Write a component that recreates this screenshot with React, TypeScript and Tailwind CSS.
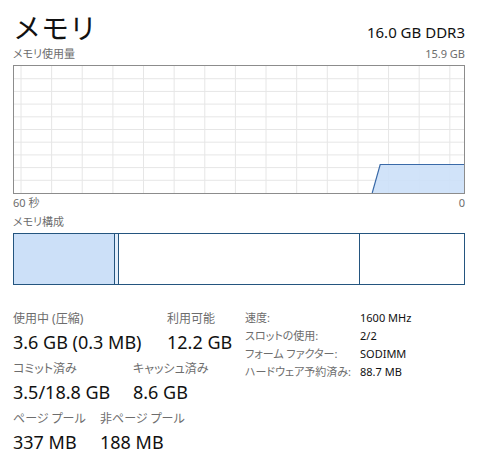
import React from 'react';

const usageFill = '#cce0f8';
const usageLine = '#3a6aa8';

const vLines = Array.from({ length: 15 }, (_, i) => 7 + i * 30.7);
const hLines = Array.from({ length: 9 }, (_, i) => 12.7 * (i + 1));

const UsageGraph: React.FC = () => (
  <div className="h-[129px] w-full border border-[#8c8c8c] bg-white">
    <svg width="100%" height="127" viewBox="0 0 451 127" preserveAspectRatio="none" className="block">
      {vLines.map(x => (
        <line key={`v${x}`} x1={x} y1={0} x2={x} y2={127} stroke="#e6e6e6" strokeWidth={1} />
      ))}
      {hLines.map(y => (
        <line key={`h${y}`} x1={0} y1={y} x2={451} y2={y} stroke="#e6e6e6" strokeWidth={1} />
      ))}
      <polygon points="359,127 367,98.5 451,98.5 451,127" fill={usageFill} fillOpacity={0.9} />
      <polyline points="359,127 367,98.5 451,98.5" fill="none" stroke={usageLine} strokeWidth={1.2} />
    </svg>
  </div>
);

const Stat: React.FC<{ label: string; value: string; width?: string }> = ({ label, value, width }) => (
  <div className={width}>
    <div className="text-[12px] leading-[16px] text-[#6d6d6d] [font-feature-settings:'palt']">{label}</div>
    <div className="mt-[2px] text-[18px] leading-[26px] text-[#111]">{value}</div>
  </div>
);

const details = [
  ['速度:', '1600 MHz'],
  ['スロットの使用:', '2/2'],
  ['フォーム ファクター:', 'SODIMM'],
  ['ハードウェア予約済み:', '88.7 MB'],
];

export default function App() {
  return (
    <div className="h-[469px] w-[488px] bg-white pl-[13px] pr-[23px] font-['Noto_Sans','Noto_Sans_CJK_JP',sans-serif]">
      <div className="flex items-end justify-between pt-[10px]">
        <div className="text-[28px] leading-[36px] text-[#111]">メモリ</div>
        <div className="pb-[4px] text-[15px] leading-[20px] text-[#111]">16.0 GB DDR3</div>
      </div>
      <div className="flex justify-between text-[11px] leading-[16px] text-[#6d6d6d] [font-feature-settings:'palt']">
        <span>メモリ使用量</span>
        <span>15.9 GB</span>
      </div>
      <div className="mt-[3px]">
        <UsageGraph />
      </div>
      <div className="mt-[1px] flex justify-between text-[11px] leading-[16px] text-[#6d6d6d]">
        <span>60 秒</span>
        <span>0</span>
      </div>
      <div className="mt-[3px] text-[11px] leading-[16px] text-[#6d6d6d] [font-feature-settings:'palt']">メモリ構成</div>
      <div className="mt-[3px] flex h-[52px] w-full border border-[#24557f]">
        <div className="w-[101px] border-r border-[#24557f] bg-[#cce0f8]" />
        <div className="w-[4px] border-r border-[#24557f] bg-[#e3eefb]" />
        <div className="flex-1 border-r border-[#24557f]" />
        <div className="w-[104px]" />
      </div>
      <div className="mt-[24px] flex">
        <div className="w-[232px] pt-[2px]">
          <div className="flex">
            <Stat label="使用中 (圧縮)" value="3.6 GB (0.3 MB)" width="w-[154px]" />
            <Stat label="利用可能" value="12.2 GB" />
          </div>
          <div className="mt-[6px] flex">
            <Stat label="コミット済み" value="3.5/18.8 GB" width="w-[120px]" />
            <Stat label="キャッシュ済み" value="8.6 GB" />
          </div>
          <div className="mt-[6px] flex">
            <Stat label="ページ プール" value="337 MB" width="w-[87px]" />
            <Stat label="非ページ プール" value="188 MB" />
          </div>
        </div>
        <div>
          {details.map(([k, v]) => (
            <div key={k} className="flex text-[11px] leading-[18px]">
              <span className="w-[115px] text-[#6d6d6d] [font-feature-settings:'palt']">{k}</span>
              <span className="text-[#111]">{v}</span>
            </div>
          ))}
        </div>
      </div>
    </div>
  );
}
